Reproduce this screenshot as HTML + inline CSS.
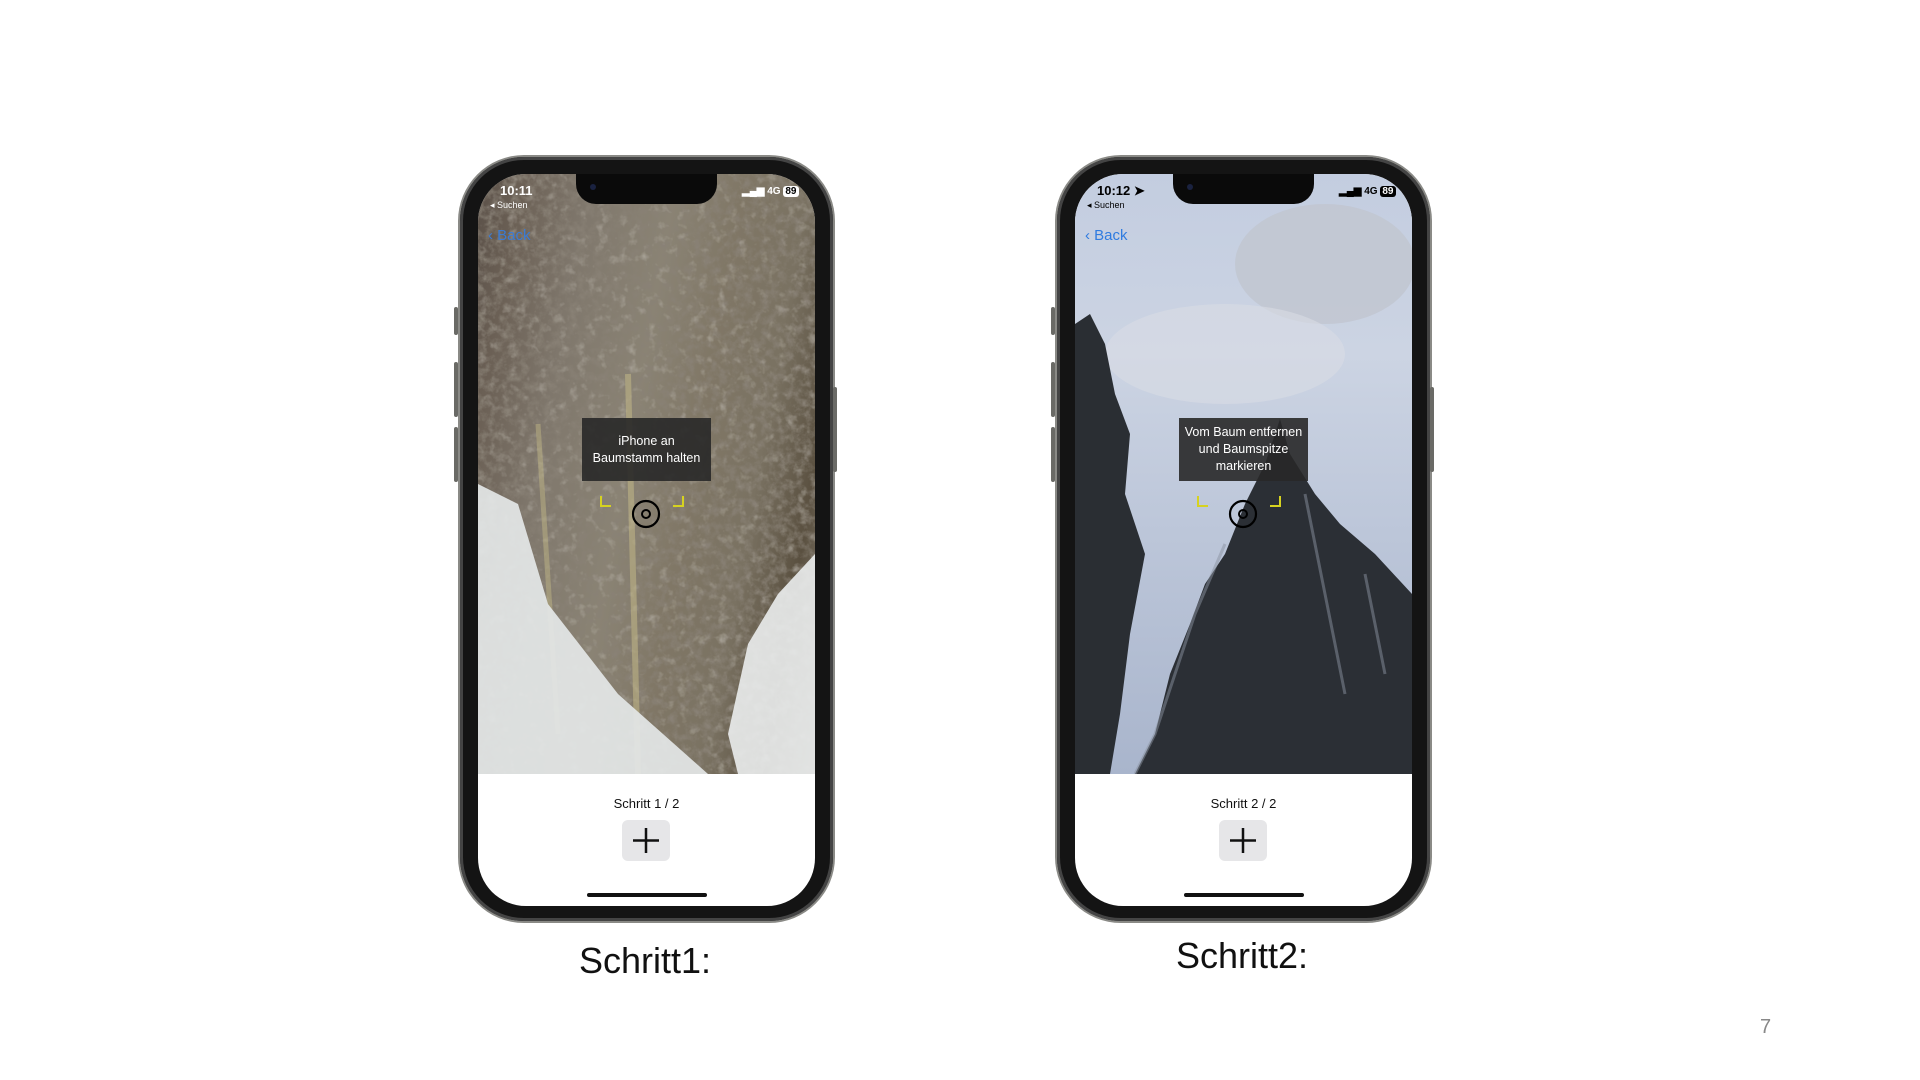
<!DOCTYPE html>
<html><head><meta charset="utf-8"><style>
body{margin:0;width:1920px;height:1080px;background:#fff;position:relative;overflow:hidden;font-family:"Liberation Sans",sans-serif}
.ph{position:absolute;top:157px;width:373px;height:764px;border-radius:64px;background:#141414;box-shadow:0 0 0 2px #8a8a86,inset 0 0 0 3px #444;}
.btn{position:absolute;background:#6a6a66;width:4px;border-radius:2px}
.scr{position:absolute;left:18px;top:17px;width:337px;height:732px;border-radius:48px;overflow:hidden;background:#fff}
.photo{position:absolute;left:0;top:0;width:337px;height:600px;overflow:hidden}
.notch{position:absolute;left:98px;top:0;width:141px;height:30px;background:#0a0a0a;border-radius:0 0 20px 20px}
.notch:before{content:"";position:absolute;left:14px;top:10px;width:6px;height:6px;border-radius:50%;background:#1a2240}
.tip{position:absolute;left:104px;top:244px;width:129px;height:63px;background:rgba(40,40,40,.9);color:#fff;font-size:12.5px;text-align:center;line-height:17px;display:flex;align-items:center;justify-content:center;flex-direction:column}
.step{position:absolute;left:0;width:337px;top:622px;text-align:center;font-size:13px;color:#111}
.plus{position:absolute;left:144px;top:646px;width:48px;height:41px;background:#e6e6e8;border-radius:6px}
.home{position:absolute;left:109px;top:719px;width:120px;height:4px;border-radius:2px;background:#111}
.st{position:absolute;font-size:13px;font-weight:bold;color:#fff}
.cap{position:absolute;font-size:36px;color:#111;width:300px;text-align:center}
</style></head><body>

<!-- Phone 1 -->
<div class="ph" style="left:460px">
<div class="btn" style="left:-6px;top:150px;height:28px"></div>
<div class="btn" style="left:-6px;top:205px;height:55px"></div>
<div class="btn" style="left:-6px;top:270px;height:55px"></div>
<div class="btn" style="left:373px;top:230px;height:85px"></div>
<div class="scr">
 <div class="photo" style="background:linear-gradient(100deg,#5a5048 0%,#6b6055 10%,#7f776c 25%,#8a8374 45%,#807766 60%,#7a7262 75%,#5a5040 88%,#8f887c 100%)">
  <svg width="337" height="600" style="position:absolute;left:0;top:0">
   <defs><filter id="n"><feTurbulence type="fractalNoise" baseFrequency="0.12" numOctaves="4" seed="3"/><feColorMatrix values="0 0 0 0 0.25 0 0 0 0 0.22 0 0 0 0 0.18 0 0 0 2.2 -0.9"/></filter>
   <filter id="m"><feTurbulence type="fractalNoise" baseFrequency="0.1" numOctaves="3" seed="9"/><feColorMatrix values="0 0 0 0 0.7 0 0 0 0 0.68 0 0 0 0 0.62 0 0 0 1.6 -0.9"/></filter></defs>
   <rect width="337" height="600" filter="url(#n)"/>
   <rect width="337" height="600" filter="url(#m)" opacity=".6"/>
   <path d="M150 200 L160 600" stroke="#c9be8a" stroke-width="6" opacity=".5"/>
   <path d="M60 250 L80 560" stroke="#bfb585" stroke-width="5" opacity=".5"/>
   <path d="M0 310 L40 330 L70 430 L140 520 L230 600 L0 600Z" fill="#e4e7e7" opacity=".92"/>
   <path d="M337 380 L300 420 L270 470 L250 560 L260 600 L337 600Z" fill="#e8eaea" opacity=".92"/>
  </svg>
 </div>
 <div class="notch"></div>
 <div class="st" style="left:22px;top:9px">10:11</div>
 <div class="st" style="left:12px;top:26px;font-size:9px;font-weight:normal">◂ Suchen</div>
 <div class="st" style="left:264px;top:12px;font-size:10px">▂▄▆ 4G <span style="background:#fff;color:#000;border-radius:3px;padding:0 2px">89</span></div>
 <div class="st" style="left:10px;top:53px;color:#3b7bd4;font-weight:normal;font-size:15px">‹ Back</div>
 <div class="tip">iPhone an<br>Baumstamm halten</div>
 <svg style="position:absolute;left:0;top:0" width="337" height="600">
  <path d="M123 322 V332 H133 M205 322 V332 H195" stroke="#d6d220" stroke-width="2" fill="none"/>
  <circle cx="168" cy="340" r="13" stroke="#000" stroke-width="2.2" fill="none"/>
  <circle cx="168" cy="340" r="4" stroke="#000" stroke-width="2" fill="none"/>
 </svg>
 <div class="step">Schritt 1 / 2</div>
 <div class="plus"><svg width="48" height="41"><path d="M24 8V33M11 20.5H37" stroke="#111" stroke-width="2.5"/></svg></div>
 <div class="home"></div>
</div></div>

<!-- Phone 2 -->
<div class="ph" style="left:1057px">
<div class="btn" style="left:-6px;top:150px;height:28px"></div>
<div class="btn" style="left:-6px;top:205px;height:55px"></div>
<div class="btn" style="left:-6px;top:270px;height:55px"></div>
<div class="btn" style="left:373px;top:230px;height:85px"></div>
<div class="scr">
 <div class="photo" style="background:linear-gradient(180deg,#c3cde0 0%,#ccd4e3 30%,#bcc6d9 60%,#a9b5cc 100%)">
  <svg width="337" height="600" style="position:absolute;left:0;top:0">
   <ellipse cx="250" cy="90" rx="90" ry="60" fill="#c0c5d0" opacity=".8"/>
   <ellipse cx="150" cy="180" rx="120" ry="50" fill="#d8dce5" opacity=".6"/>
   <path d="M0 150 L15 140 L30 170 L40 220 L55 260 L50 320 L70 380 L55 460 L45 540 L35 600 L0 600Z" fill="#2a2e33"/>
   <path d="M205 245 L215 280 L240 320 L265 350 L300 380 L337 420 L337 600 L60 600 L80 560 L95 500 L115 450 L130 410 L150 380 L170 330 L190 290Z" fill="#2b2f35"/>
   <path d="M150 370 L120 440 L100 500 L80 560 L60 600" stroke="#8a92a0" stroke-width="3" fill="none" opacity=".5"/>
   <path d="M230 320 L250 420 L270 520 M290 400 L310 500" stroke="#8a92a0" stroke-width="3" fill="none" opacity=".5"/>
  </svg>
 </div>
 <div class="notch"></div>
 <div class="st" style="left:22px;top:9px;color:#000">10:12 ➤</div>
 <div class="st" style="left:12px;top:26px;font-size:9px;font-weight:normal;color:#000">◂ Suchen</div>
 <div class="st" style="left:264px;top:12px;font-size:10px;color:#000">▂▄▆ 4G <span style="background:#000;color:#fff;border-radius:3px;padding:0 2px">89</span></div>
 <div class="st" style="left:10px;top:53px;color:#2f7be0;font-weight:normal;font-size:15px">‹ Back</div>
 <div class="tip">Vom Baum entfernen<br>und Baumspitze<br>markieren</div>
 <svg style="position:absolute;left:0;top:0" width="337" height="600">
  <path d="M123 322 V332 H133 M205 322 V332 H195" stroke="#d6d220" stroke-width="2" fill="none"/>
  <circle cx="168" cy="340" r="13" stroke="#000" stroke-width="2.2" fill="none"/>
  <circle cx="168" cy="340" r="4" stroke="#000" stroke-width="2" fill="none"/>
 </svg>
 <div class="step">Schritt 2 / 2</div>
 <div class="plus"><svg width="48" height="41"><path d="M24 8V33M11 20.5H37" stroke="#111" stroke-width="2.5"/></svg></div>
 <div class="home"></div>
</div></div>

<div class="cap" style="left:495px;top:940px">Schritt1:</div>
<div class="cap" style="left:1092px;top:935px">Schritt2:</div>
<div style="position:absolute;left:1760px;top:1016px;font-size:20px;color:#888">7</div>
</body></html>
